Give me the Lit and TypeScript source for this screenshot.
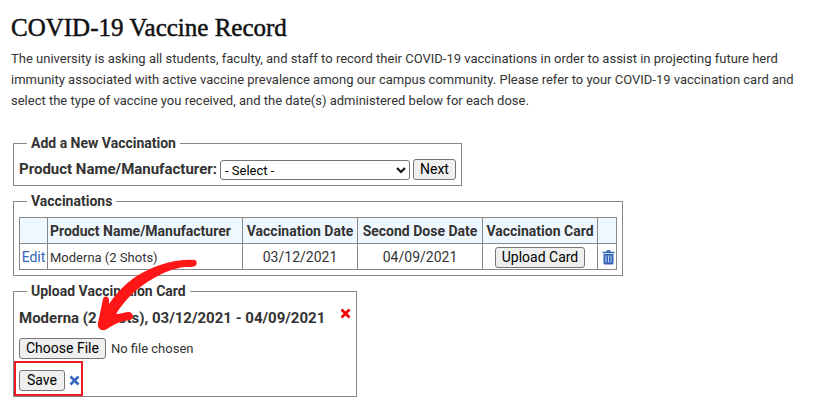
import { LitElement, html, css } from "lit";
import { customElement, state } from "lit/decorators.js";

interface Vaccination {
  product: string;
  first: string;
  second: string;
}

@customElement("app-root")
export class AppRoot extends LitElement {
  static styles = css`
    :host {
      display: block;
      box-sizing: border-box;
      padding: 12px 13px 11px;
      background: #fff;
      color: #333;
      font: 14px/21px Roboto, "Liberation Sans", sans-serif;
    }
    h1 {
      margin: 0 0 4px -2px;
      color: #111;
      font: 400 25px/32px "Liberation Serif", serif;
      -webkit-text-stroke: 0.5px #111;
    }
    p {
      margin: 0 0 24px -2px;
      font-size: 13px;
    }
    fieldset {
      position: relative;
      box-sizing: border-box;
      width: fit-content;
      margin: 0 0 7px;
      padding: 7px 5px 5px;
      border: 1px solid #888;
    }
    legend {
      margin-left: 8px;
      padding: 0 4px;
      font-weight: 700;
      line-height: 17px;
    }
    button,
    select,
    input::file-selector-button {
      box-sizing: border-box;
      height: 21px;
      margin: 0;
      padding: 0 6px;
      border: 1px solid #767676;
      border-radius: 3px;
      background: #efefef;
      color: #000;
      font: 14px/19px Roboto, "Liberation Sans", sans-serif;
    }
    .row {
      display: flex;
      align-items: center;
      gap: 4px;
    }
    .product-row {
      gap: 3px;
    }
    .row label,
    .dose {
      font-size: 15px;
      font-weight: 700;
    }
    .picker {
      position: relative;
      display: flex;
    }
    .picker select {
      width: 190px;
      height: 20px;
      padding: 0 4px;
      appearance: none;
      background: #fff;
      font-size: 13px;
    }
    .chevron {
      position: absolute;
      right: 4px;
      top: 6px;
      pointer-events: none;
    }
    table {
      border-collapse: collapse;
      table-layout: fixed;
      width: 597px;
    }
    th,
    td {
      box-sizing: border-box;
      height: 26px;
      padding: 1px 0 0;
      border: 1px solid #888;
      text-align: center;
      white-space: nowrap;
      line-height: 21px;
    }
    th {
      background: #f0f8ff;
    }
    td.product {
      font-size: 13px;
    }
    .product {
      padding-left: 2px;
      text-align: left;
    }
    .c-edit { width: 28px; }
    .c-product { width: 195px; }
    .c-first { width: 115px; }
    .c-second { width: 125px; }
    .c-card { width: 115px; }
    .c-remove { width: 19px; }
    a {
      color: #3465b8;
      text-decoration: none;
    }
    td button {
      display: block;
      margin: 0 auto;
    }
    button.icon {
      display: flex;
      height: auto;
      padding: 0;
      border: 0;
      background: none;
    }
    td button.icon {
      padding-left: 2px;
    }
    .dose {
      display: flex;
      gap: 15px;
      margin-bottom: 8px;
      line-height: 23px;
    }
    .dose .icon {
      align-self: flex-start;
      margin-top: 1px;
    }
    .file {
      display: block;
      height: 21px;
      margin-bottom: 11px;
      color: #333;
      font: 13px/21px Roboto, "Liberation Sans", sans-serif;
    }
    .file::file-selector-button {
      margin-right: 5px;
    }
    .save {
      position: relative;
      width: fit-content;
    }
    .save button:first-child {
      min-width: 46px;
    }
    .save::after {
      content: "";
      position: absolute;
      inset: -9px -3px -5px -5px;
      border: 2px solid #ed1c24;
      pointer-events: none;
    }
    .arrow {
      position: absolute;
      left: 82px;
      top: -43px;
      pointer-events: none;
    }
  `;

  @state() private records: Vaccination[] = [
    { product: "Moderna (2 Shots)", first: "03/12/2021", second: "04/09/2021" },
  ];

  private cross(color: string) {
    return html`<svg width="11" height="11" viewBox="0 0 11 11" aria-hidden="true">
      <path d="M1.5 1.5L9.5 9.5M9.5 1.5L1.5 9.5" stroke=${color} stroke-width="2.6" />
    </svg>`;
  }

  render() {
    return html`
      <h1>COVID-19 Vaccine Record</h1>
      <p>
        The university is asking all students, faculty, and staff to record their COVID-19
        vaccinations in order to assist in projecting future herd immunity associated with active
        vaccine prevalence among our campus community. Please refer to your COVID-19 vaccination
        card and select the type of vaccine you received, and the date(s) administered below for
        each dose.
      </p>

      <fieldset>
        <legend>Add a New Vaccination</legend>
        <div class="row product-row">
          <label for="product">Product Name/Manufacturer:</label>
          <span class="picker">
            <select id="product"><option>- Select -</option></select>
            <svg class="chevron" width="10" height="8" viewBox="0 0 10 8" aria-hidden="true">
              <path d="M1 2L5 6L9 2" fill="none" stroke="#111" stroke-width="2" />
            </svg>
          </span>
          <button>Next</button>
        </div>
      </fieldset>

      <fieldset>
        <legend>Vaccinations</legend>
        <table>
          <thead>
            <tr>
              <th class="c-edit"></th>
              <th class="c-product product">Product Name/Manufacturer</th>
              <th class="c-first">Vaccination Date</th>
              <th class="c-second">Second Dose Date</th>
              <th class="c-card">Vaccination Card</th>
              <th class="c-remove"></th>
            </tr>
          </thead>
          <tbody>
            ${this.records.map(
              (r) => html`<tr>
                <td><a href="#edit">Edit</a></td>
                <td class="product">${r.product}</td>
                <td>${r.first}</td>
                <td>${r.second}</td>
                <td><button>Upload Card</button></td>
                <td>
                  <button class="icon" aria-label="Delete">
                    <svg width="13" height="15" viewBox="0 0 13 15" aria-hidden="true">
                      <path d="M0.5 2.5H12.5M4.5 1H8.5" stroke="#3465b8" stroke-width="1.6" />
                      <path d="M1.5 4H11.5V13Q11.5 14.5 10 14.5H3Q1.5 14.5 1.5 13Z" fill="#3465b8" />
                      <path d="M4 5.5V12.5M6.5 5.5V12.5M9 5.5V12.5" stroke="#c4d4f0" stroke-width="1" />
                    </svg>
                  </button>
                </td>
              </tr>`
            )}
          </tbody>
        </table>
      </fieldset>

      <fieldset>
        <legend>Upload Vaccination Card</legend>
        <div class="dose">
          <span>Moderna (2 Shots), 03/12/2021 - 04/09/2021</span>
          <button class="icon" aria-label="Remove">${this.cross("#f00000")}</button>
        </div>
        <input class="file" type="file" aria-label="Vaccination card file" />
        <div class="row save">
          <button>Save</button>
          <button class="icon" aria-label="Cancel">${this.cross("#3568bd")}</button>
        </div>
        <svg class="arrow" width="104" height="76" viewBox="95 257 104 76" aria-hidden="true">
          <path
            fill="#ff1616"
            d="M192 260C195 259 197 263 195 265C194 267 190 267 184 267C173 268 162 273 153 278C137 287 125 298 115 314C120 314 124 312 128 312C133 313 133 319 129 320C120 321 113 324 106 329C101 332 96 329 97 323L102 299C103 295 108 296 108 300V304C118 289 132 276 149 269C162 263 179 259 192 260Z"
          />
        </svg>
      </fieldset>
    `;
  }
}
